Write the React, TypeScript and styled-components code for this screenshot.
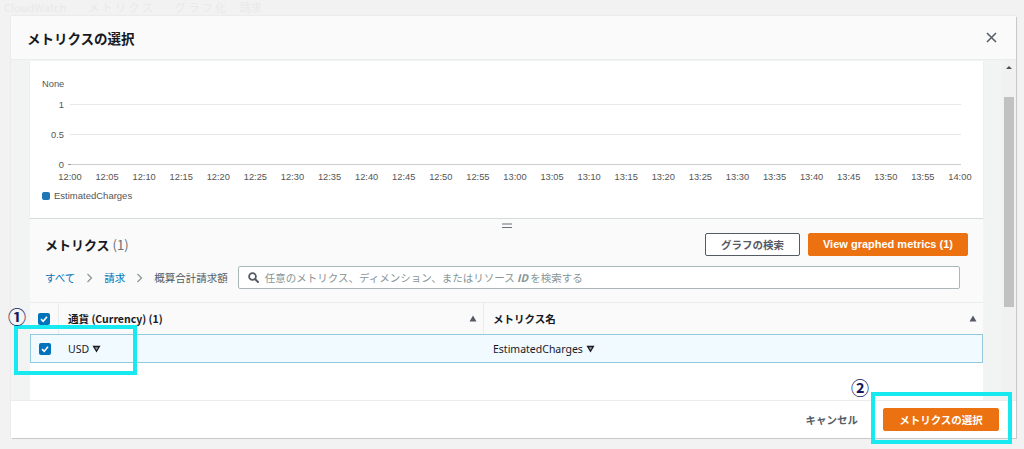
import React from "react";
import styled, { createGlobalStyle } from "styled-components";

const JP = `"Noto Sans CJK JP", "Noto Sans", sans-serif`;
const LATIN = `"Noto Sans", "Noto Sans CJK JP", sans-serif`;
const CHART = `"Liberation Sans", Arial, sans-serif`;

const GlobalStyle = createGlobalStyle`
  html, body {
    margin: 0;
    padding: 0;
    background: #f2f2f2;
  }
  body {
    font-family: ${JP};
    color: #16191f;
  }
  * {
    box-sizing: border-box;
  }
`;

const xLabels = Array.from({ length: 25 }, (_, i) => {
  const m = i * 5;
  const h = 12 + Math.floor(m / 60);
  return `${h}:${String(m % 60).padStart(2, "0")}`;
});

const yTicks = [
  { label: "1", y: 43.5 },
  { label: "0.5", y: 73.5 },
  { label: "0", y: 103.5 },
];

const Chart: React.FC = () => (
  <svg width={953} height={127} style={{ display: "block" }}>
    <g fontFamily={CHART} fontSize={9.3} fill="#555">
      <text x={12} y={26}>
        None
      </text>
      {yTicks.map((t) => (
        <text key={t.label} x={34} y={t.y + 3} textAnchor="end">
          {t.label}
        </text>
      ))}
      {xLabels.map((l, i) => (
        <text key={l} x={40 + i * 37.08} y={119} textAnchor="middle">
          {l}
        </text>
      ))}
    </g>
    {yTicks.map((t, i) => (
      <line
        key={t.label}
        x1={40}
        x2={931}
        y1={t.y}
        y2={t.y}
        stroke={i === 2 ? "#cfcfcf" : "#e8e8e8"}
        strokeWidth={1}
      />
    ))}
    <line x1={38} x2={41} y1={103.5} y2={103.5} stroke="#999" />
  </svg>
);

const SortUp = () => (
  <svg width={8} height={7} viewBox="0 0 8 7">
    <path d="M4 0.5 L7.5 6.5 L0.5 6.5 Z" fill="#545b64" />
  </svg>
);

const Caret = () => (
  <svg width={9} height={8} viewBox="0 0 9 8" style={{ marginLeft: 3 }}>
    <path d="M0.5 0.8 H8.5 L4.5 7.5 Z" fill="#16191f" />
    <path d="M2.8 2.2 H6.2 L4.5 5 Z" fill="#f1faff" opacity={0.6} />
  </svg>
);

const Chevron = () => (
  <svg width={7} height={10} viewBox="0 0 7 10">
    <path d="M1.5 1 L5.5 5 L1.5 9" fill="none" stroke="#879596" strokeWidth={1.2} />
  </svg>
);

const SearchIcon = () => (
  <svg width={11} height={11} viewBox="0 0 11 11">
    <circle cx={4.5} cy={4.5} r={3.4} fill="none" stroke="#545b64" strokeWidth={1.8} />
    <path d="M7 7 L10 10" stroke="#545b64" strokeWidth={2} strokeLinecap="round" />
  </svg>
);

const CloseIcon = () => (
  <svg width={11} height={11} viewBox="0 0 11 11">
    <path d="M1 1 L10 10 M10 1 L1 10" stroke="#545b64" strokeWidth={1.5} />
  </svg>
);

const Check: React.FC = () => (
  <CheckBox>
    <svg width={10} height={10} viewBox="0 0 10 10">
      <path d="M2 5.2 L4.2 7.3 L8 2.8" fill="none" stroke="#fff" strokeWidth={1.6} />
    </svg>
  </CheckBox>
);

export default function App() {
  return (
    <>
      <GlobalStyle />
      <Page>
        <BackdropText>
          CloudWatch　　メ ト リ ク ス　　グ ラ フ 化　 請求
        </BackdropText>
        <Modal>
          <Header>
            <Title>メトリクスの選択</Title>
            <CloseIcon />
          </Header>

          <Body>
            <BodyMain>
              <ContentCol>
                <ChartPanel>
                  <Chart />
                  <Legend>
                    <LegendSwatch />
                    EstimatedCharges
                  </Legend>
                </ChartPanel>

                <MetricsSection>
                  <Handle>
                    <svg width={10} height={6} viewBox="0 0 10 6">
                      <path d="M0 1 H10 M0 4.5 H10" stroke="#687078" strokeWidth={1.2} />
                    </svg>
                  </Handle>
                  <TitleRow>
                    <Heading>
                      メトリクス <Count>(1)</Count>
                    </Heading>
                    <ButtonGroup>
                      <Button $variant="normal" $width={95}>
                        グラフの検索
                      </Button>
                      <Button $variant="primary" $width={160} $latin>
                        View graphed metrics (1)
                      </Button>
                    </ButtonGroup>
                  </TitleRow>
                  <CrumbRow>
                    <Crumb $link>すべて</Crumb>
                    <Chevron />
                    <Crumb $link>請求</Crumb>
                    <Chevron />
                    <Crumb>概算合計請求額</Crumb>
                    <SearchBox>
                      <SearchIcon />
                      <Placeholder>
                        任意のメトリクス、ディメンション、またはリソース <b><i>ID</i></b> を検索する
                      </Placeholder>
                    </SearchBox>
                  </CrumbRow>
                </MetricsSection>

                <Table>
                  <HeaderRow>
                    <CheckCell>
                      <Check />
                    </CheckCell>
                    <HeaderCell>
                      通貨 (Currency) (1)
                      <SortUp />
                    </HeaderCell>
                    <HeaderCell>
                      メトリクス名
                      <SortUp />
                    </HeaderCell>
                  </HeaderRow>
                  <DataRow>
                    <CheckCell>
                      <Check />
                    </CheckCell>
                    <DataCell>
                      USD
                      <Caret />
                    </DataCell>
                    <DataCell>
                      EstimatedCharges
                      <Caret />
                    </DataCell>
                  </DataRow>
                </Table>
              </ContentCol>
            </BodyMain>
            <Scrollbar>
              <ScrollArrow />
              <ScrollThumb />
            </Scrollbar>
          </Body>

          <Footer>
            <CancelText>キャンセル</CancelText>
            <Button $variant="primary" $width={116}>
              メトリクスの選択
            </Button>
          </Footer>
        </Modal>

        <Highlight style={{ left: 14, top: 325, width: 123, height: 50 }} />
        <Highlight style={{ left: 871, top: 392, width: 141, height: 52 }} />
        <StepMark style={{ left: 8, top: 306 }}>①</StepMark>
        <StepMark style={{ left: 851, top: 377 }}>②</StepMark>
      </Page>
    </>
  );
}

const Page = styled.div`
  position: relative;
  width: 1024px;
  height: 449px;
  overflow: hidden;
  background: #f2f2f2;
`;

const BackdropText = styled.div`
  height: 16px;
  padding-left: 4px;
  line-height: 14px;
  font-size: 11px;
  color: #e9e9e9;
  white-space: nowrap;
`;

const Modal = styled.div`
  margin-left: 11px;
  width: 1005px;
  height: 422px;
  display: flex;
  flex-direction: column;
  background: #fff;
  box-shadow: 1px 1px 0 #c9c9c9, 0 0 2px rgba(0, 0, 0, 0.08);
`;

const Header = styled.div`
  height: 44px;
  flex: none;
  display: flex;
  align-items: center;
  justify-content: space-between;
  padding: 0 19px 0 16px;
  background: #fafafa;
  border-bottom: 1px solid #eaeded;
`;

const Title = styled.div`
  font-family: ${JP};
  font-size: 13.5px;
  font-weight: 700;
  color: #16191f;
`;

const Body = styled.div`
  flex: 1;
  min-height: 0;
  display: flex;
  overflow: hidden;
`;

const BodyMain = styled.div`
  flex: 1;
  padding: 1px 19px 0;
  background: #f2f3f3;
  overflow: hidden;
`;

const ContentCol = styled.div`
  height: 100%;
  display: flex;
  flex-direction: column;
`;

const ChartPanel = styled.div`
  height: 158px;
  flex: none;
  background: #fff;
  border-bottom: 1px solid #d5dbdb;
  box-shadow: 0 1px 1px rgba(0, 0, 0, 0.12);
`;

const Legend = styled.div`
  display: flex;
  align-items: center;
  gap: 4px;
  padding-left: 12px;
  margin-top: 2px;
  font-family: ${CHART};
  font-size: 9.5px;
  color: #555;
`;

const LegendSwatch = styled.span`
  width: 8px;
  height: 8px;
  border-radius: 2px;
  background: #1f77b4;
`;

const MetricsSection = styled.div`
  flex: none;
  padding: 0 15px 13px;
  background: #fafafa;
`;

const Handle = styled.div`
  height: 14px;
  display: flex;
  justify-content: center;
  align-items: center;
`;

const TitleRow = styled.div`
  height: 22px;
  display: flex;
  align-items: center;
  justify-content: space-between;
`;

const Heading = styled.div`
  font-family: ${JP};
  font-size: 13px;
  font-weight: 700;
  color: #16191f;
`;

const Count = styled.span`
  font-weight: 400;
  color: #687078;
`;

const ButtonGroup = styled.div`
  display: flex;
  gap: 8px;
`;

const Button = styled.div<{ $variant: "normal" | "primary"; $width: number; $latin?: boolean }>`
  width: ${(p) => p.$width}px;
  height: 23px;
  display: flex;
  align-items: center;
  justify-content: center;
  border-radius: 2px;
  font-family: ${(p) => (p.$latin ? `"Liberation Sans", Arial, sans-serif` : JP)};
  font-size: ${(p) => (p.$latin ? "11px" : "10.5px")};
  font-weight: 700;
  border: 1px solid ${(p) => (p.$variant === "primary" ? "#ec7211" : "#545b64")};
  background: ${(p) => (p.$variant === "primary" ? "#ec7211" : "#fff")};
  color: ${(p) => (p.$variant === "primary" ? "#fff" : "#545b64")};
`;

const CrumbRow = styled.div`
  margin-top: 11px;
  height: 23px;
  display: flex;
  align-items: center;
  gap: 11px;
`;

const Crumb = styled.span<{ $link?: boolean }>`
  font-family: ${JP};
  font-size: 10.5px;
  white-space: nowrap;
  color: ${(p) => (p.$link ? "#0073bb" : "#545b64")};
`;

const SearchBox = styled.div`
  flex: 1;
  height: 23px;
  margin-left: -1px;
  margin-right: 8px;
  display: flex;
  align-items: center;
  gap: 6px;
  padding-left: 9px;
  background: #fff;
  border: 1px solid #aab7b8;
  border-radius: 2px;
`;

const Placeholder = styled.span`
  font-family: ${JP};
  font-size: 10.5px;
  color: #879596;
  white-space: nowrap;
`;

const Table = styled.div`
  flex: 1;
  background: #fff;
`;

const HeaderRow = styled.div`
  height: 32px;
  display: grid;
  grid-template-columns: 28px 425px 1fr;
  background: #fafafa;
  border-top: 1px solid #eaeded;
`;

const CheckCell = styled.div`
  display: flex;
  align-items: center;
  justify-content: center;
`;

const CheckBox = styled.span`
  width: 12px;
  height: 12px;
  display: flex;
  align-items: center;
  justify-content: center;
  border-radius: 2px;
  background: #0073bb;
`;

const HeaderCell = styled.div`
  display: flex;
  align-items: center;
  justify-content: space-between;
  padding: 0 6px 0 9px;
  border-left: 1px solid #eaeded;
  font-family: ${JP};
  font-size: 10.5px;
  font-weight: 700;
  color: #16191f;
`;

const DataRow = styled.div`
  height: 29px;
  display: grid;
  grid-template-columns: 27px 425px 1fr;
  background: #f1faff;
  border: 1px solid #93c9df;
`;

const DataCell = styled.div`
  display: flex;
  align-items: center;
  padding-left: 10px;
  font-family: ${LATIN};
  font-size: 10.5px;
  color: #16191f;
`;

const Scrollbar = styled.div`
  width: 14px;
  flex: none;
  display: flex;
  flex-direction: column;
  align-items: center;
  padding-top: 6px;
  background: #f1f1f1;
`;

const ScrollArrow = styled.span`
  width: 0;
  height: 0;
  border-left: 3px solid transparent;
  border-right: 3px solid transparent;
  border-bottom: 3px solid #505050;
`;

const ScrollThumb = styled.span`
  margin-top: 28px;
  width: 10px;
  height: 210px;
  background: #c1c1c1;
`;

const Footer = styled.div`
  height: 38px;
  flex: none;
  display: flex;
  justify-content: flex-end;
  align-items: center;
  gap: 25px;
  padding-right: 17px;
  background: #fff;
  border-top: 1px solid #eaeded;
`;

const CancelText = styled.span`
  font-family: ${JP};
  font-size: 10.5px;
  font-weight: 700;
  color: #545b64;
`;

const Highlight = styled.div`
  position: absolute;
  border: 4px solid #17e9f0;
`;

const StepMark = styled.div`
  position: absolute;
  font-family: ${JP};
  font-size: 18px;
  font-weight: 700;
  line-height: 20px;
  color: #14175e;
`;
